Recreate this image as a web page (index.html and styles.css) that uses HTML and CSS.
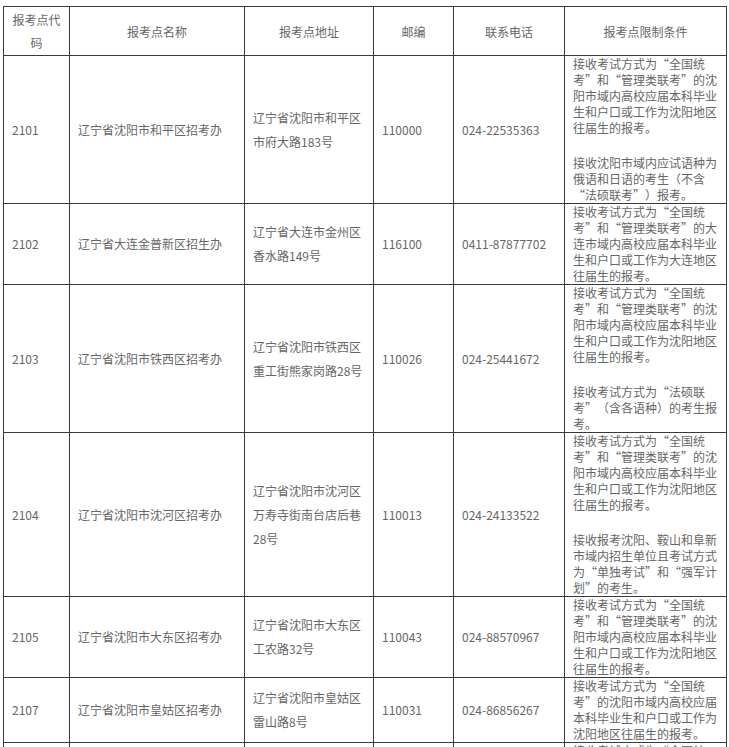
FILE: index.html
```html
<!DOCTYPE html>
<html lang="zh-CN">
<head>
<meta charset="utf-8">
<title>报考点</title>
<link rel="stylesheet" href="styles.css">
</head>
<body>
<table class="sites">
  <colgroup>
    <col class="c-code">
    <col class="c-name">
    <col class="c-addr">
    <col class="c-zip">
    <col class="c-tel">
    <col class="c-cond">
  </colgroup>
  <thead>
    <tr>
      <th>报考点代<br>码</th>
      <th>报考点名称</th>
      <th>报考点地址</th>
      <th>邮编</th>
      <th>联系电话</th>
      <th>报考点限制条件</th>
    </tr>
  </thead>
  <tbody>
    <tr>
      <td>2101</td>
      <td>辽宁省沈阳市和平区招考办</td>
      <td class="addr">辽宁省沈阳市和平区<br>市府大路183号</td>
      <td>110000</td>
      <td>024-22535363</td>
      <td class="cond">
        <p>接收考试方式为<span class="qo">“</span>全国统<br>考<span class="qc">”</span>和<span class="qo">“</span>管理类联考<span class="qc">”</span>的沈<br>阳市域内高校应届本科毕业<br>生和户口或工作为沈阳地区<br>往届生的报考。</p>
        <p>接收沈阳市域内应试语种为<br>俄语和日语的考生（不含<br><span class="qo">“</span>法硕联考<span class="qc">”</span>）报考。</p>
      </td>
    </tr>
    <tr>
      <td>2102</td>
      <td>辽宁省大连金普新区招生办</td>
      <td class="addr">辽宁省大连市金州区<br>香水路149号</td>
      <td>116100</td>
      <td>0411-87877702</td>
      <td class="cond">
        <p>接收考试方式为<span class="qo">“</span>全国统<br>考<span class="qc">”</span>和<span class="qo">“</span>管理类联考<span class="qc">”</span>的大<br>连市域内高校应届本科毕业<br>生和户口或工作为大连地区<br>往届生的报考。</p>
      </td>
    </tr>
    <tr>
      <td>2103</td>
      <td>辽宁省沈阳市铁西区招考办</td>
      <td class="addr">辽宁省沈阳市铁西区<br>重工街熊家岗路28号</td>
      <td>110026</td>
      <td>024-25441672</td>
      <td class="cond">
        <p>接收考试方式为<span class="qo">“</span>全国统<br>考<span class="qc">”</span>和<span class="qo">“</span>管理类联考<span class="qc">”</span>的沈<br>阳市域内高校应届本科毕业<br>生和户口或工作为沈阳地区<br>往届生的报考。</p>
        <p>接收考试方式为<span class="qo">“</span>法硕联<br>考<span class="qc">”</span>（含各语种）的考生报<br>考。</p>
      </td>
    </tr>
    <tr>
      <td>2104</td>
      <td>辽宁省沈阳市沈河区招考办</td>
      <td class="addr">辽宁省沈阳市沈河区<br>万寿寺街南台店后巷<br>28号</td>
      <td>110013</td>
      <td>024-24133522</td>
      <td class="cond">
        <p>接收考试方式为<span class="qo">“</span>全国统<br>考<span class="qc">”</span>和<span class="qo">“</span>管理类联考<span class="qc">”</span>的沈<br>阳市域内高校应届本科毕业<br>生和户口或工作为沈阳地区<br>往届生的报考。</p>
        <p>接收报考沈阳、鞍山和阜新<br>市域内招生单位且考试方式<br>为<span class="qo">“</span>单独考试<span class="qc">”</span>和<span class="qo">“</span>强军计<br>划<span class="qc">”</span>的考生。</p>
      </td>
    </tr>
    <tr>
      <td>2105</td>
      <td>辽宁省沈阳市大东区招考办</td>
      <td class="addr">辽宁省沈阳市大东区<br>工农路32号</td>
      <td>110043</td>
      <td>024-88570967</td>
      <td class="cond">
        <p>接收考试方式为<span class="qo">“</span>全国统<br>考<span class="qc">”</span>和<span class="qo">“</span>管理类联考<span class="qc">”</span>的沈<br>阳市域内高校应届本科毕业<br>生和户口或工作为沈阳地区<br>往届生的报考。</p>
      </td>
    </tr>
    <tr>
      <td>2107</td>
      <td>辽宁省沈阳市皇姑区招考办</td>
      <td class="addr">辽宁省沈阳市皇姑区<br>雷山路8号</td>
      <td>110031</td>
      <td>024-86856267</td>
      <td class="cond">
        <p>接收考试方式为<span class="qo">“</span>全国统<br>考<span class="qc">”</span>的沈阳市域内高校应届<br>本科毕业生和户口或工作为<br>沈阳地区往届生的报考。</p>
      </td>
    </tr>
    <tr>
      <td></td>
      <td></td>
      <td class="addr"></td>
      <td></td>
      <td></td>
      <td class="cond">
        <p>接收考试方式为<span class="qo">“</span>全国统<br>考<span class="qc">”</span>和<span class="qo">“</span>管理类联考<span class="qc">”</span>的沈<br>阳市域内高校应届本科毕业<br>生和户口或工作为沈阳地区<br>往届生的报考。</p>
      </td>
    </tr>
  </tbody>
</table>
</body>
</html>
```

FILE: styles.css
```css
html, body {
  background: #ffffff;
}

body {
  margin: 6px 0 0 3px;
  font-family: "Noto Sans CJK SC", "Liberation Sans", sans-serif;
  font-size: 12px;
  color: #666666;
}

.sites {
  border-collapse: collapse;
  table-layout: fixed;
  width: 723px;
}

.c-code { width: 66px; }
.c-name { width: 175px; }
.c-addr { width: 129px; }
.c-zip  { width: 80px; }
.c-tel  { width: 111px; }
.c-cond { width: 162px; }

.sites th,
.sites td {
  border: 1px solid #3a3a3a;
  padding: 0 4px 0 8px;
  vertical-align: middle;
  text-align: left;
  font-weight: normal;
  line-height: 16px;
}

.sites th {
  text-align: center;
  line-height: 23px;
  padding: 1px 4px;
  height: 46px;
}

.sites td.addr {
  line-height: 24px;
}

.sites td.cond {
  vertical-align: top;
  white-space: nowrap;
  padding: 0 4px 0 8px;
}

.cond p {
  margin: 0;
}

.cond p + p {
  margin-top: 19px;
}

.qo,
.qc {
  display: inline-block;
  width: 12px;
}

.qo {
  text-align: right;
}

.qc {
  text-align: left;
}
```
